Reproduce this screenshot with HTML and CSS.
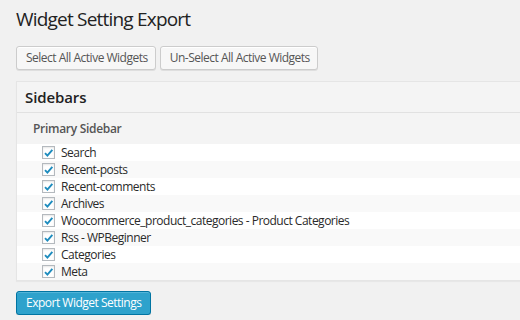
FILE: index.html
```html
<!DOCTYPE html>
<html>
<head>
<meta charset="utf-8">
<link rel="stylesheet" href="styles.css">
</head>
<body>
<div class="wrap">
  <h2 class="title">Widget Setting Export</h2>
  <div class="actions">
    <button class="btn">Select All Active Widgets</button>
    <button class="btn">Un-Select All Active Widgets</button>
  </div>
  <div class="panel">
    <div class="panel-head">Sidebars</div>
    <div class="group-head">Primary Sidebar</div>
    <ul class="list">
      <li class="row"><span class="cb"><svg viewBox="0 0 12 12" width="12" height="12"><path d="M2.2 6.2 L4.8 8.8 L10.2 2.6" fill="none" stroke="#1e8cbe" stroke-width="2.1"/></svg></span>Search</li>
      <li class="row"><span class="cb"><svg viewBox="0 0 12 12" width="12" height="12"><path d="M2.2 6.2 L4.8 8.8 L10.2 2.6" fill="none" stroke="#1e8cbe" stroke-width="2.1"/></svg></span>Recent-posts</li>
      <li class="row"><span class="cb"><svg viewBox="0 0 12 12" width="12" height="12"><path d="M2.2 6.2 L4.8 8.8 L10.2 2.6" fill="none" stroke="#1e8cbe" stroke-width="2.1"/></svg></span>Recent-comments</li>
      <li class="row"><span class="cb"><svg viewBox="0 0 12 12" width="12" height="12"><path d="M2.2 6.2 L4.8 8.8 L10.2 2.6" fill="none" stroke="#1e8cbe" stroke-width="2.1"/></svg></span>Archives</li>
      <li class="row"><span class="cb"><svg viewBox="0 0 12 12" width="12" height="12"><path d="M2.2 6.2 L4.8 8.8 L10.2 2.6" fill="none" stroke="#1e8cbe" stroke-width="2.1"/></svg></span>Woocommerce_product_categories - Product Categories</li>
      <li class="row"><span class="cb"><svg viewBox="0 0 12 12" width="12" height="12"><path d="M2.2 6.2 L4.8 8.8 L10.2 2.6" fill="none" stroke="#1e8cbe" stroke-width="2.1"/></svg></span>Rss - WPBeginner</li>
      <li class="row"><span class="cb"><svg viewBox="0 0 12 12" width="12" height="12"><path d="M2.2 6.2 L4.8 8.8 L10.2 2.6" fill="none" stroke="#1e8cbe" stroke-width="2.1"/></svg></span>Categories</li>
      <li class="row"><span class="cb"><svg viewBox="0 0 12 12" width="12" height="12"><path d="M2.2 6.2 L4.8 8.8 L10.2 2.6" fill="none" stroke="#1e8cbe" stroke-width="2.1"/></svg></span>Meta</li>
    </ul>
  </div>
  <button class="btn-primary">Export Widget Settings</button>
</div>
</body>
</html>
```
FILE: styles.css
```css
html, body {
  margin: 0;
  padding: 0;
  overflow: hidden;
  background: #f1f1f1;
  font-family: "Open Sans", "Noto Sans", sans-serif;
  color: #444;
}
.wrap {
  padding: 0 0 0 16px;
  width: 600px;
}
.title {
  margin: 5px 0 0;
  font-size: 19px;
  letter-spacing: -0.8px;
  font-weight: 400;
  line-height: 29px;
  color: #222;
}
.actions {
  display: flex;
  gap: 4px;
  margin-top: 12px;
}
.btn {
  height: 24px;
  padding: 0 7px 0 9px;
  font-family: inherit;
  font-size: 12px;
  letter-spacing: -0.5px;
  line-height: 22px;
  color: #555;
  background: #f7f7f7;
  border: 1px solid #cccccc;
  border-radius: 3px;
  box-shadow: inset 0 1px 0 #fff, 0 1px 0 rgba(0,0,0,0.08);
}
.panel {
  margin-top: 11px;
  background: #fff;
  border: 1px solid #e5e5e5;
  box-shadow: 0 1px 1px rgba(0,0,0,0.04);
}
.panel-head {
  height: 30px;
  line-height: 30px;
  padding-left: 8px;
  font-size: 15px;
  letter-spacing: -0.1px;
  font-weight: 600;
  color: #222;
  background: #f4f4f4;
  border-bottom: 1px solid #e1e1e1;
}
.group-head {
  height: 31px;
  line-height: 31px;
  padding-left: 16px;
  font-size: 12px;
  letter-spacing: -0.3px;
  font-weight: 600;
  color: #555;
  background: #f4f4f4;
}
.list {
  list-style: none;
  margin: 0;
  padding: 0;
}
.row {
  display: flex;
  align-items: center;
  height: 17px;
  padding-left: 25px;
  font-size: 12px;
  letter-spacing: -0.5px;
  color: #2a2a2a;
  background: #fff;
}
.row:nth-child(even) {
  background: #f9f9f9;
}
.cb {
  display: flex;
  align-items: center;
  justify-content: center;
  box-sizing: border-box;
  width: 13px;
  height: 13px;
  margin-right: 6px;
  background: #fff;
  border: 1px solid #b4b9be;
  box-shadow: inset 0 1px 2px rgba(0,0,0,0.1);
}
.btn-primary {
  margin-top: 10px;
  height: 24px;
  padding: 0 9px;
  font-family: inherit;
  font-size: 12px;
  letter-spacing: -0.5px;
  line-height: 22px;
  color: #fff;
  background: #2ea2cc;
  border: 1px solid #0074a2;
  border-radius: 3px;
  box-shadow: inset 0 1px 0 rgba(120,200,230,0.5), 0 1px 0 rgba(0,0,0,0.15);
}
```
